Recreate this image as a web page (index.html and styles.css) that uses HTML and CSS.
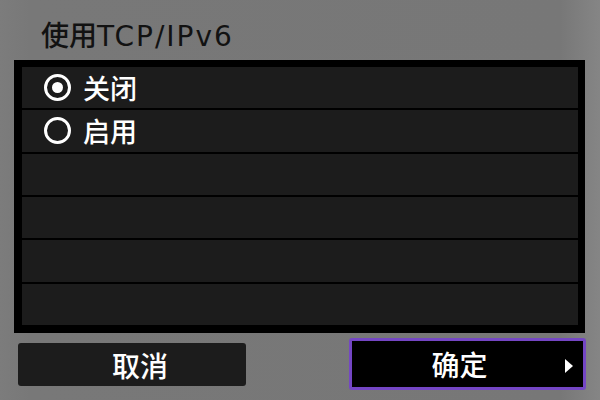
FILE: index.html
```html
<!DOCTYPE html>
<html lang="zh-CN">
<head>
<meta charset="utf-8">
<title>使用TCP/IPv6</title>
<link rel="stylesheet" href="styles.css">
</head>
<body>
<div class="screen">
  <div class="title"><span class="cjk">使用</span><span class="latin">TCP/IPv6</span></div>
  <div class="panel">
    <div class="row"><span class="radio checked"></span><span class="label">关闭</span></div>
    <div class="row"><span class="radio"></span><span class="label">启用</span></div>
    <div class="row"></div>
    <div class="row"></div>
    <div class="row"></div>
    <div class="row"></div>
  </div>
  <div class="footer">
    <div class="btn cancel">取消</div>
    <div class="btn ok"><span class="ok-text">确定</span><span class="arrow"></span></div>
  </div>
</div>
</body>
</html>
```

FILE: styles.css
```css
* { box-sizing: border-box; }
html, body {
  margin: 0;
  padding: 0;
  width: 600px;
  height: 400px;
  overflow: hidden;
  background: #787878;
  font-family: "Noto Sans CJK SC", "Noto Sans", sans-serif;
}
.screen {
  width: 600px;
  height: 400px;
  display: flex;
  flex-direction: column;
  background: linear-gradient(to right, #7c7c7c 0, #787878 30px, #777777 560px, #828282 590px, #858585 600px);
}
.title {
  height: 60px;
  padding-left: 41px;
  padding-top: 14px;
  font-size: 28px;
  line-height: 40px;
  color: #121212;
  font-weight: 500;
  white-space: nowrap;
}
.title .latin {
  letter-spacing: 2px;
  font-weight: 500;
  font-family: "DejaVu Sans", "Noto Sans", sans-serif;
  font-size: 28px;
}
.panel {
  margin-left: 14px;
  width: 571px;
  height: 273px;
  background: #000;
  border-style: solid;
  border-color: #000;
  border-width: 7px 7px 8px 8px;
  display: grid;
  grid-template-rows: repeat(6, 1fr);
  row-gap: 2px;
}
.row {
  background: #1c1c1c;
  display: flex;
  align-items: center;
  padding-left: 22px;
}
.radio {
  width: 27px;
  height: 27px;
  border: 3px solid #fff;
  border-radius: 50%;
  display: flex;
  align-items: center;
  justify-content: center;
  flex: none;
}
.radio.checked::after {
  content: "";
  width: 11px;
  height: 11px;
  border-radius: 50%;
  background: #fff;
}
.label {
  margin-left: 12px;
  font-size: 27px;
  line-height: 30px;
  color: #fff;
  font-weight: 500;
}
.footer {
  flex: 1;
  display: flex;
  align-items: flex-start;
  padding: 0 14px 0 18px;
}
.btn {
  color: #fff;
  font-size: 28px;
  font-weight: 500;
  display: flex;
  align-items: center;
  justify-content: center;
  border-radius: 3px;
}
.cancel {
  margin-top: 10px;
  width: 228px;
  height: 43px;
  background: #1c1c1c;
  padding-left: 16px;
}
.ok {
  margin-left: auto;
  margin-top: 5px;
  width: 237px;
  height: 52px;
  background: #000;
  border: 3px solid #7446c4;
  position: relative;
  padding-left: 0;
}
.ok-text {
  margin-left: -16px;
}
.arrow {
  position: absolute;
  right: 10px;
  top: 18px;
  width: 0;
  height: 0;
  border-top: 7px solid transparent;
  border-bottom: 7px solid transparent;
  border-left: 8px solid #fff;
}
```
